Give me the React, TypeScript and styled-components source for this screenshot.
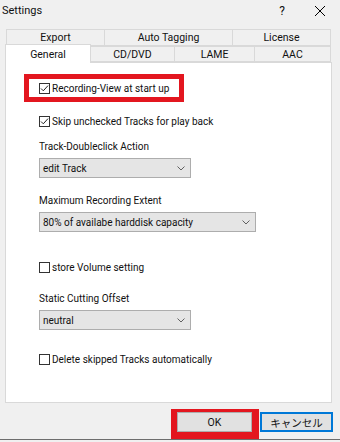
import { createGlobalStyle, styled } from "styled-components";

const GlobalStyle = createGlobalStyle`
  html, body {
    margin: 0;
    padding: 0;
    background: #f0f0f0;
  }
  body {
    font-family: Roboto, "Noto Sans", "Noto Sans CJK JP", sans-serif;
    font-size: 10px;
    color: #111;
  }
`;

/** window frame */
const Window = styled.div`
  width: 340px;
  height: 442px;
  background: #f0f0f0;
  display: flex;
  flex-direction: column;
  overflow: hidden;
`;

const TitleBar = styled.div`
  height: 21px;
  display: flex;
  align-items: center;
  padding-left: 2px;
  font-size: 11px;
`;

const Title = styled.span`
  flex: 1;
`;

const TitleButton = styled.span<{ $width: number }>`
  width: ${(p) => p.$width}px;
  display: flex;
  justify-content: center;
  align-items: center;
  font-size: 12px;
`;

/** tabs */
const TabArea = styled.div`
  margin: 8px 0 0 5px;
  width: 327px;
  display: flex;
  flex-direction: column;
`;

const TabRow = styled.div<{ $height: number; $indent: number }>`
  display: flex;
  height: ${(p) => p.$height}px;
  padding-left: ${(p) => p.$indent}px;
`;

const Tab = styled.div<{ $width: number; $active?: boolean }>`
  box-sizing: border-box;
  width: ${(p) => p.$width}px;
  margin-left: -1px;
  border: 1px solid #d9d9d9;
  border-bottom: ${(p) => (p.$active ? "none" : "1px solid #d9d9d9")};
  background: ${(p) => (p.$active ? "#fff" : "#f0f0f0")};
  display: flex;
  justify-content: center;
  align-items: center;
  font-size: 10.5px;
  position: relative;
  z-index: ${(p) => (p.$active ? 2 : 1)};
  margin-top: ${(p) => (p.$active ? -2 : 0)}px;
  height: ${(p) => (p.$active ? "calc(100% + 3px)" : "100%")};
  &:first-child {
    margin-left: 0;
  }
`;

const Panel = styled.div`
  box-sizing: border-box;
  margin-left: 5px;
  width: 327px;
  height: 341px;
  background: #fff;
  border: 1px solid #d9d9d9;
  padding-left: 33px;
  display: flex;
  flex-direction: column;
  align-items: flex-start;
`;

/** red annotation box */
const Highlight = styled.div<{ $border: string; $top?: number; $left?: number }>`
  border: solid #e3161f;
  border-width: ${(p) => p.$border};
  margin-top: ${(p) => p.$top ?? 0}px;
  margin-left: ${(p) => p.$left ?? 0}px;
  display: flex;
  align-items: center;
`;

const CheckRow = styled.label<{ $top?: number; $pad?: number; $width?: number }>`
  box-sizing: border-box;
  height: ${(p) => (p.$width ? 18 : 16)}px;
  width: ${(p) => (p.$width ? `${p.$width}px` : "auto")};
  margin-top: ${(p) => p.$top ?? 0}px;
  padding-left: ${(p) => p.$pad ?? 0}px;
  display: flex;
  align-items: center;
  gap: 2px;
  white-space: nowrap;
`;

const Box = styled.span`
  width: 11px;
  height: 11px;
  display: flex;
  flex-shrink: 0;
`;

const FieldLabel = styled.div<{ $top: number }>`
  height: 16px;
  margin-top: ${(p) => p.$top}px;
  display: flex;
  align-items: center;
`;

const Select = styled.div<{ $width: number }>`
  box-sizing: border-box;
  width: ${(p) => p.$width}px;
  height: 20px;
  margin-top: 4px;
  background: #e5e5e5;
  border: 1px solid #adadad;
  display: flex;
  align-items: center;
  justify-content: space-between;
  padding: 0 5px 0 3px;
`;

/** footer buttons */
const Footer = styled.div`
  height: 37px;
  display: flex;
  justify-content: flex-end;
  align-items: flex-start;
  padding: 6px 7px 0 0;
  box-sizing: border-box;
  border-bottom: 1px solid #6d6d6d;
`;

const Button = styled.div<{ $default?: boolean; $width: number; $top?: number }>`
  box-sizing: border-box;
  width: ${(p) => p.$width}px;
  height: 20px;
  margin-top: ${(p) => p.$top ?? 0}px;
  margin-left: ${(p) => (p.$default ? 1 : 0)}px;
  background: #e1e1e1;
  border: 1px solid ${(p) => (p.$default ? "#0078d7" : "#adadad")};
  box-shadow: ${(p) => (p.$default ? "inset 0 0 0 1px #0078d7" : "none")};
  display: flex;
  justify-content: center;
  align-items: center;
  font-size: 10.5px;
`;

function CheckBox({ checked }: { checked: boolean }) {
  return (
    <Box>
      <svg width="11" height="11" viewBox="0 0 11 11">
        <rect x="0.5" y="0.5" width="10" height="10" fill="#fff" stroke="#333" />
        {checked && (
          <path d="M2 5.5 L4.3 7.8 L9 2.6" fill="none" stroke="#222" strokeWidth="1" />
        )}
      </svg>
    </Box>
  );
}

function Chevron() {
  return (
    <svg width="8" height="5" viewBox="0 0 8 5">
      <path d="M0.5 0.5 L4 4 L7.5 0.5" fill="none" stroke="#606060" strokeWidth="1" />
    </svg>
  );
}

function App() {
  return (
    <Window>
      <GlobalStyle />
      <TitleBar>
        <Title>Settings</Title>
        <TitleButton $width={36}>?</TitleButton>
        <TitleButton $width={40}>
          <svg width="10" height="10" viewBox="0 0 10 10">
            <path d="M0 0 L10 10 M10 0 L0 10" stroke="#000" strokeWidth="1" />
          </svg>
        </TitleButton>
      </TitleBar>
      <TabArea>
        <TabRow $height={17} $indent={1}>
          <Tab $width={99}>Export</Tab>
          <Tab $width={129}>Auto Tagging</Tab>
          <Tab $width={99}>License</Tab>
        </TabRow>
        <TabRow $height={16} $indent={0}>
          <Tab $width={86} $active>
            General
          </Tab>
          <Tab $width={85}>CD/DVD</Tab>
          <Tab $width={81}>LAME</Tab>
          <Tab $width={77}>AAC</Tab>
        </TabRow>
      </TabArea>
      <Panel>
        <Highlight $border="5px" $top={11} $left={-15}>
          <CheckRow $pad={10} $width={150}>
            <CheckBox checked />
            Recording-View at start up
          </CheckRow>
        </Highlight>
        <CheckRow $top={11}>
          <CheckBox checked />
          Skip unchecked Tracks for play back
        </CheckRow>
        <FieldLabel $top={9}>Track-Doubleclick Action</FieldLabel>
        <Select $width={152}>
          edit Track
          <Chevron />
        </Select>
        <FieldLabel $top={14}>Maximum Recording Extent</FieldLabel>
        <Select $width={217}>
          80% of availabe harddisk capacity
          <Chevron />
        </Select>
        <CheckRow $top={27}>
          <CheckBox checked={false} />
          store Volume setting
        </CheckRow>
        <FieldLabel $top={15}>Static Cutting Offset</FieldLabel>
        <Select $width={152}>
          neutral
          <Chevron />
        </Select>
        <CheckRow $top={21}>
          <CheckBox checked={false} />
          Delete skipped Tracks automatically
        </CheckRow>
      </Panel>
      <Footer>
        <Highlight $border="3px 7px 7px 6px">
          <Button $width={75}>OK</Button>
        </Highlight>
        <Button $width={73} $top={3} $default>
          キャンセル
        </Button>
      </Footer>
    </Window>
  );
}

export default App;
